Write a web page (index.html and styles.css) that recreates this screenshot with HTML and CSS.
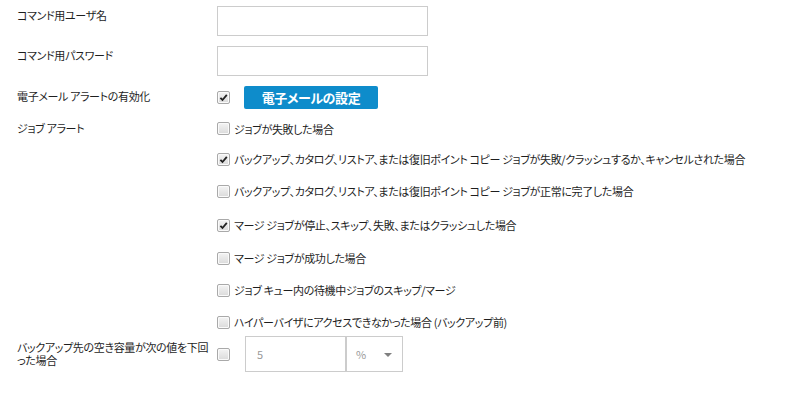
FILE: index.html
```html
<!DOCTYPE html>
<html lang="ja">
    <head>
        <meta charset="utf-8">
        <title>電子メール アラート</title>
        <link rel="stylesheet" href="styles.css">
    </head>
    <body>
        <div class="form">
            <div class="row row-text">
                <div class="label">コマンド用ユーザ名</div>
                <div class="field"><input type="text" class="textbox"></div>
            </div>
            <div class="row row-text">
                <div class="label">コマンド用パスワード</div>
                <div class="field"><input type="password" class="textbox"></div>
            </div>
            <div class="row row-mail">
                <div class="label">電子メール アラートの有効化</div>
                <div class="field field-inline">
                    <span class="cb checked"><svg viewBox="0 0 12 12"><path d="M2.6 6.4 L4.9 8.7 L9.6 3.2" /></svg></span>
                    <button class="mailbutton">電子メールの設定</button>
                </div>
            </div>
            <div class="row row-jobs">
                <div class="label">ジョブ アラート</div>
                <ul class="options">
                    <li><span class="cb"></span>ジョブが失敗した場合</li>
                    <li class="short"><span class="cb checked"><svg viewBox="0 0 12 12"><path d="M2.6 6.4 L4.9 8.7 L9.6 3.2" /></svg></span>バックアップ、カタログ、リストア、または復旧ポイント コピー ジョブが失敗/クラッシュするか、キャンセルされた場合</li>
                    <li class="tall"><span class="cb"></span>バックアップ、カタログ、リストア、または復旧ポイント コピー ジョブが正常に完了した場合</li>
                    <li class="tall"><span class="cb checked"><svg viewBox="0 0 12 12"><path d="M2.6 6.4 L4.9 8.7 L9.6 3.2" /></svg></span>マージ ジョブが停止、スキップ、失敗、またはクラッシュした場合</li>
                    <li><span class="cb"></span>マージ ジョブが成功した場合</li>
                    <li><span class="cb"></span>ジョブ キュー内の待機中ジョブのスキップ/マージ</li>
                    <li><span class="cb"></span>ハイパーバイザにアクセスできなかった場合 (バックアップ前)</li>
                </ul>
            </div>
            <div class="row row-space">
                <div class="label">バックアップ先の空き容量が次の値を下回った場合</div>
                <div class="field field-inline">
                    <span class="cb"></span>
                    <div class="threshold">
                        <input type="text" class="amount" value="5" disabled>
                        <div class="unit">%<span class="arrow"></span></div>
                    </div>
                </div>
            </div>
        </div>
    </body>
</html>
```

FILE: styles.css
```css
body{
    margin: 0;
    background: #fff;
    color: #1e1e1e;
    font-family: "Noto Sans CJK JP", "Liberation Sans", sans-serif;
    font-size: 11px;
    letter-spacing: -0.35px;
    font-feature-settings: "palt" 1;
}
.form{
    padding: 6px 0 0 17px;
}
.row{
    display: flex;
}
.label{
    width: 200px;
    flex: none;
    line-height: 14px;
}
.row-text{
    height: 30px;
    margin-bottom: 10px;
}
.row-text .label{
    padding-top: 2px;
}
.textbox{
    box-sizing: border-box;
    width: 211px;
    height: 30px;
    border: 1px solid #cccccc;
    margin: 0;
    padding: 0 6px;
    font: inherit;
}
.row-mail{
    height: 23px;
    align-items: center;
}
.row-mail .label{
    margin-top: -4px;
}
.field-inline{
    display: flex;
    align-items: center;
}
.cb{
    box-sizing: border-box;
    display: inline-block;
    flex: none;
    width: 13px;
    height: 13px;
    border: 1px solid #a9a9a9;
    border-radius: 2px;
    background: linear-gradient(#f4f4f4, #dadada);
    box-shadow: inset 0 0 0 1px #fafafa;
}
.cb svg{
    display: block;
    width: 11px;
    height: 11px;
}
.cb svg path{
    fill: none;
    stroke: #222;
    stroke-width: 2;
}
.mailbutton{
    margin: 0 0 0 14px;
    width: 134px;
    height: 23px;
    border: 0;
    border-radius: 2px;
    background: #0e8ccb;
    color: #fff;
    font: inherit;
    font-size: 13px;
    font-weight: bold;
    letter-spacing: -0.4px;
    padding: 0;
}
.row-jobs{
    margin-top: 4px;
}
.row-jobs .label{
    padding-top: 8px;
}
.options{
    list-style: none;
    margin: 0;
    padding: 0;
}
.options li{
    height: 32px;
    display: flex;
    align-items: center;
    white-space: nowrap;
}
.options li:first-child{
    height: 31px;
}
.options li.short{
    height: 30px;
}
.options li.tall{
    height: 34px;
}
.options .cb{
    margin-right: 4px;
}
.row-space{
    align-items: center;
    margin-top: -2px;
}
.row-space .label{
    line-height: 13px;
    padding-right: 2px;
    box-sizing: border-box;
}
.threshold{
    display: flex;
    margin-left: 15px;
    height: 36px;
}
.amount{
    box-sizing: border-box;
    width: 100px;
    height: 36px;
    margin: 0;
    border: 1px solid #cccccc;
    border-right: 0;
    background: #fff;
    padding: 0 11px;
    color: #999;
    font: inherit;
}
.unit{
    box-sizing: border-box;
    width: 58px;
    height: 36px;
    border: 1px solid #cccccc;
    border-left: 2px solid #cccccc;
    padding-left: 9px;
    color: #999;
    display: flex;
    align-items: center;
    position: relative;
}
.arrow{
    position: absolute;
    right: 10px;
    top: 16px;
    border-left: 4px solid transparent;
    border-right: 4px solid transparent;
    border-top: 4px solid #808080;
}
```
